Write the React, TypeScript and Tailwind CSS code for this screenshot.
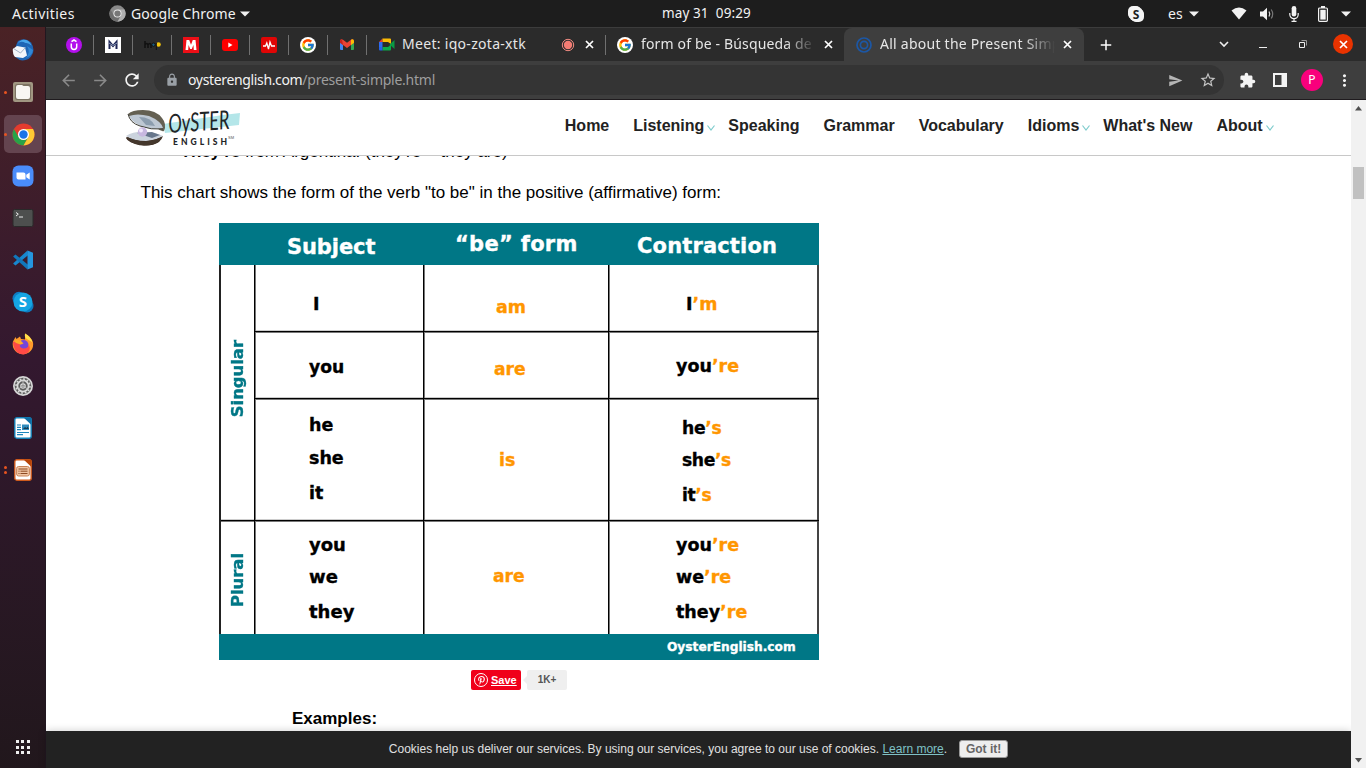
import React from "react";
import {
  MdArrowBack,
  MdArrowForward,
  MdRefresh,
  MdLock,
  MdSend,
  MdStarBorder,
  MdExtension,
  MdMoreVert,
  MdAdd,
} from "react-icons/md";
import { FcGoogle } from "react-icons/fc";
import { FaPinterestP } from "react-icons/fa";

const ubuntu = "font-['Noto_Sans',sans-serif]";

function Caret() {
  return (
    <svg width="10" height="6" viewBox="0 0 10 6" className="shrink-0">
      <path d="M0 .5h10L5 5.5z" fill="#f2f2f2" />
    </svg>
  );
}

function Cross({ className = "" }: { className?: string }) {
  return (
    <svg width="9" height="9" viewBox="0 0 9 9" className={`shrink-0 ${className}`}>
      <path d="M1 1l7 7M8 1 1 8" stroke="#fff" strokeWidth="1.700" fill="none" />
    </svg>
  );
}

function ChromeIcon({ size, mono = false }: { size: number; mono?: boolean }) {
  const [r, g, y, b, w] = mono
    ? ["#8a8a8a", "#6e6e6e", "#b0b0b0", "#777777", "#e8e8e8"]
    : ["#e33b2e", "#27a348", "#fcc934", "#1a73e8", "#ffffff"];
  return (
    <svg width={size} height={size} viewBox="0 0 48 48" className="shrink-0">
      <circle cx="24" cy="24" r="23" fill={r} />
      <path d="M4.100 12.500A23 23 0 0 0 24 47l10-17.300-10 5.800-10-5.800z" fill={g} />
      <path d="M24 47a23 23 0 0 0 19.900-34.500H24l10 5.800v11.400z" fill={y} />
      <circle cx="24" cy="24" r="11.500" fill={w} />
      <circle cx="24" cy="24" r="8.800" fill={b} />
    </svg>
  );
}

function TopBar() {
  return (
    <div className={`flex h-[27px] shrink-0 items-center bg-[#1d1d1d] text-[14px] text-[#f2f2f2] ${ubuntu}`}>
      <div className="w-[97px] pl-3 tracking-[0.45px]">Activities</div>
      <div className="flex w-[565px] items-center pl-3">
        <ChromeIcon size={17} mono />
        <span className="ml-[5px] mr-[5px] w-[104px] whitespace-nowrap tracking-[0.1px]">Google Chrome</span>
        <Caret />
      </div>
      <div className="w-[466px] whitespace-pre text-[13.5px] tracking-[0.1px]">may 31  09:29</div>
      <svg width="16" height="16" viewBox="0 0 16 16">
        <rect width="13" height="13" rx="5" fill="#f4f4f4" />
        <rect x="3" y="3" width="13" height="13" rx="5" fill="#f4f4f4" />
        <circle cx="8" cy="8" r="7.500" fill="#f4f4f4" />
        <text x="8" y="12.500" textAnchor="middle" className="text-[12px] font-bold" fontFamily="Noto Sans" fill="#1d1d1d">S</text>
      </svg>
      <span className="ml-6 mr-[6px]">es</span>
      <Caret />
      <svg width="16" height="13" viewBox="0 0 16 13" className="ml-8">
        <path d="M.5 3.500Q8-2.500 15.500 3.500L8 12.500z" fill="#f2f2f2" />
      </svg>
      <svg width="16" height="14" viewBox="0 0 16 14" className="ml-[12px]">
        <path d="M1 4.500h3L8 .8v12.400L4 9.500H1z" fill="#f2f2f2" />
        <path d="M10 4.500q1.600 2.500 0 5" stroke="#ddd" fill="none" strokeWidth="1.200" />
        <path d="M12.200 2.500q3 4.500 0 9" stroke="#777" fill="none" strokeWidth="1.200" />
      </svg>
      <svg width="10" height="16" viewBox="0 0 10 16" className="ml-[14px]">
        <rect x="2.700" y="0" width="4.600" height="10.500" rx="2.300" fill="#f2f2f2" />
        <path d="M.8 7v1.500a4.200 4.200 0 0 0 8.400 0V7M5 12.500V15M2.500 15.400h5" stroke="#f2f2f2" fill="none" strokeWidth="1.200" />
      </svg>
      <svg width="10" height="16" viewBox="0 0 10 16" className="ml-[19px]">
        <rect x=".6" y="2" width="8.800" height="13.300" rx="1" fill="none" stroke="#f2f2f2" strokeWidth="1.200" />
        <rect x="2.300" y="3.800" width="5.400" height="9.800" fill="#f2f2f2" />
        <rect x="3" y="0" width="4" height="2" fill="#f2f2f2" />
      </svg>
      <div className="ml-[13px]">
        <Caret />
      </div>
    </div>
  );
}

function DockItem({ children, dots = 0, active = false }: { children?: React.ReactNode; dots?: number; active?: boolean }) {
  return (
    <div className="flex h-[38px] w-[46px] items-center">
      <div className="z-10 flex w-1 flex-col items-end gap-[2px]">
        {dots > 0 && <i className="-mr-[3px] size-[3px] rounded-full bg-[#e95420]" />}
        {dots > 1 && <i className="-mr-[3px] size-[3px] rounded-full bg-[#e95420]" />}
      </div>
      <div className={`flex size-[38px] items-center justify-center rounded-[5px] ${active ? "bg-[#64444f]" : ""}`}>{children}</div>
    </div>
  );
}

function DocIcon({ color, dark, slides }: { color: string; dark: string; slides?: boolean }) {
  return (
    <svg width="18" height="22" viewBox="0 0 18 22">
      <rect x=".8" y=".8" width="16.400" height="20.400" rx="2" fill="#fff" stroke={color} strokeWidth="1.400" />
      <path d="M9.500.5H16q1.500 0 1.500 1.500v6z" fill={dark} />
      {slides ? (
        <>
          <rect x="2.600" y="7.500" width="12.800" height="9.500" rx="2" fill="#f0c5a5" stroke="#c98356" />
          <path d="M4.500 10h9M6.500 12.200h7M6.500 14.500h7M4.500 12.200h1M4.500 14.500h1" stroke="#8d4a22" strokeWidth="1" />
        </>
      ) : (
        <>
          <path d="M3 8h4M3 10.300h4M3 12.600h4M3 15.500h12M3 17.700h6" stroke="#1e87bd" strokeWidth="1.200" />
          <rect x="8" y="7.500" width="7" height="5.500" fill="#2f8bbd" />
          <path d="M9 12l2-2 1.500 1 1-1.500 1.500 2.500z" fill="#173c52" />
        </>
      )}
    </svg>
  );
}

function Dock() {
  return (
    <div className="flex w-[46px] shrink-0 flex-col gap-1 border-r border-[#211720] bg-gradient-to-b from-[#4a2225] via-[#33182f] via-45% to-[#21171c] pt-1">
      <DockItem>
        <svg width="22" height="22" viewBox="0 0 22 22">
          <path d="M6 2Q13-2 19 3.500q4 6 1.500 11.500-3 6.500-10 6.500-4-.5-6.500-3Q1 12 6 2z" fill="#1f66b5" />
          <path d="M10 1q7-1 9.500 5.500-3-3-6-2.500-5-3-8 1Q7 2 10 1z" fill="#49a6ea" />
          <path d="M.8 10 5 7l8 1.500 2 8-4 2.500-8-1Q.5 15 .8 10z" fill="#f3f6fa" />
          <path d="M1.500 9.500l7 4.500 5-5.500" stroke="#9fb0c4" fill="none" />
          <path d="M15 7q4 6-1 12 6-2 7-8z" fill="#3188d6" />
        </svg>
      </DockItem>
      <DockItem dots={1}>
        <svg width="22" height="22" viewBox="0 0 22 22">
          <rect x="1" y="1" width="20" height="20" rx="2" fill="#a19782" />
          <rect x="3" y="3" width="16" height="16" rx="2" fill="#7d7463" />
          <path d="M4 6q0-2 2-2h4l1.500 1H16q2 0 2 2v9q0 2-2 2H6q-2 0-2-2z" fill="#f8f6f2" />
        </svg>
      </DockItem>
      <DockItem dots={1} active>
        <ChromeIcon size={23} />
      </DockItem>
      <DockItem>
        <svg width="22" height="22" viewBox="0 0 22 22">
          <rect x=".5" y=".5" width="21" height="21" rx="6" fill="#4a8cfa" />
          <path d="M4.500 7.500h7q2 0 2 2v5h-7q-2 0-2-2zM14.300 9.800l3.400-2.400v7.200l-3.400-2.400z" fill="#fff" />
        </svg>
      </DockItem>
      <DockItem>
        <svg width="22" height="18" viewBox="0 0 22 18">
          <rect x="1" y=".5" width="20" height="17" rx="1.500" fill="#4d4f4e" stroke="#2a2a2a" />
          <path d="M4 3.500l2.300 1.700L4 7M7 8h4" stroke="#ededed" fill="none" />
        </svg>
      </DockItem>
      <DockItem>
        <svg width="20" height="20" viewBox="0 0 20 20">
          <path d="M14.500.5 15 5.300 2.500 15.500.3 13.800v-.6z" fill="#1787cf" />
          <path d="M14.500 19.500 15 14.700 2.500 4.500.3 6.200v.6z" fill="#1177bb" />
          <path d="M14.500.5 20 2.800v14.400l-5.500 2.300z" fill="#2596df" />
        </svg>
      </DockItem>
      <DockItem>
        <svg width="22" height="22" viewBox="0 0 22 22">
          <circle cx="7" cy="7.300" r="6.500" fill="#0e7cc1" />
          <circle cx="15" cy="15" r="6.500" fill="#0e7cc1" />
          <circle cx="11" cy="11" r="9.500" fill="#15a5e3" />
          <text x="11" y="16" textAnchor="middle" className="text-[15px] font-bold" fontFamily="Noto Sans" fill="#fff">S</text>
        </svg>
      </DockItem>
      <DockItem>
        <svg width="22" height="22" viewBox="0 0 22 22">
          <path d="M13 .5q6 3 8 9 1 6-4 10-6 3.500-12 0-5.500-4.500-4-11L3.500 4l1 2L8 3.500l1 2.500 4 .5z" fill="#ff9a2b" />
          <path d="M13 .5q6 3 7.500 9-2-2-4-2.500Q12 5 13 .5z" fill="#ffe14a" />
          <circle cx="11.500" cy="12" r="5" fill="#7546d8" />
          <path d="M1 9q3-1 4-1l3 .5q3 1 3 2.500l-3 .5q-1 3 3.500 4 5 0 5.500-4 3 8-5 10-10 0-11-12.500z" fill="#ff4a46" />
          <path d="M2 8l3-1.500L9 8l2.500 2.500-3 1L4 10z" fill="#ffad28" />
        </svg>
      </DockItem>
      <DockItem>
        <svg width="22" height="22" viewBox="0 0 22 22">
          <circle cx="11" cy="11" r="10" fill="#d8d8d8" />
          <circle cx="11" cy="11" r="8.300" fill="#5c5c5c" />
          <circle cx="11" cy="11" r="5.600" fill="none" stroke="#dadada" strokeWidth="1.800" />
          <circle cx="11" cy="11" r="7" fill="none" stroke="#dadada" strokeWidth="1.500" strokeDasharray="1.800 1.860" />
          <circle cx="11" cy="11" r="2.200" fill="none" stroke="#dadada" strokeWidth="1.200" />
          <path d="M11 11V5.500M11 11l-4.700 3M11 11l4.700 3" stroke="#bdbdbd" />
        </svg>
      </DockItem>
      <DockItem>
        <DocIcon color="#1582b8" dark="#0d6ea5" />
      </DockItem>
      <DockItem dots={2}>
        <DocIcon color="#cf5a1c" dark="#b74409" slides />
      </DockItem>
      <div className="mb-[14px] mt-auto grid grid-cols-[3px_3px_3px] justify-center gap-[2.5px]">
        {Array.from({ length: 9 }, (_, i) => (
          <i key={i} className="size-[3px] bg-[#eeeeee]" />
        ))}
      </div>
    </div>
  );
}

function GoogleDot() {
  return (
    <div className="flex size-4 shrink-0 items-center justify-center rounded-full bg-white">
      <FcGoogle size={14} />
    </div>
  );
}

function Pinned({ children }: { children: React.ReactNode }) {
  return (
    <div className="flex h-5 w-[39px] items-center justify-center border-r border-[#707070]">{children}</div>
  );
}

const fade = "[mask-image:linear-gradient(to_right,#000_82%,transparent)]";

function TabStrip() {
  return (
    <div className={`flex h-[34px] items-center border-t border-[#3c3c3c] bg-[#2b2b2b] pl-[9px] text-[14px] text-[#e6e6e6] ${ubuntu}`}>
      <Pinned>
        <svg width="16" height="16" viewBox="0 0 16 16">
          <circle cx="8" cy="8" r="8" fill="#b30fec" />
          <path d="M5.300 6.500v3.300a2.700 2.700 0 0 0 5.400 0V6.500M5.500 4.600 8 3l2.500 1.600" stroke="#fff" strokeWidth="1.500" fill="none" />
        </svg>
      </Pinned>
      <Pinned>
        <svg width="16" height="16" viewBox="0 0 16 16">
          <path fill="#fff" d="M0 0h16v16H0z" />
          <path d="M4.500 12V5l3.500 4 3.500-4v7" stroke="#1d2454" strokeWidth="2" fill="none" />
          <path d="M4 6l4 2.500L12 6" stroke="#8998b5" fill="none" />
        </svg>
      </Pinned>
      <Pinned>
        <svg width="17" height="12" viewBox="0 0 17 12">
          <path d="M1 9V2M1 6q2-3 3 0v3M4 6q2-3 3 0v3" stroke="#111" strokeWidth="1.500" fill="none" />
          <circle cx="9.500" cy="5.700" r="1.700" fill="#1a5a80" stroke="#111" />
          <circle cx="14.500" cy="5.500" r="2.300" fill="#f2c40c" />
          <path d="M12.300 4v7" stroke="#111" />
        </svg>
      </Pinned>
      <Pinned>
        <svg width="16" height="16" viewBox="0 0 16 16">
          <path fill="#ed0f17" d="M0 0h16v16H0z" />
          <path d="M2.500 13 3.500 3h2.700L8 7.800 9.800 3h2.700l1 10h-2.700l-.4-5L8.800 12H7.200L5.600 8l-.4 5z" fill="#fff" />
        </svg>
      </Pinned>
      <Pinned>
        <svg width="16" height="12" viewBox="0 0 16 12">
          <rect width="16" height="12" rx="3" fill="#f00" />
          <path d="M6.300 3.500v5l4.200-2.500z" fill="#fff" />
        </svg>
      </Pinned>
      <Pinned>
        <svg width="16" height="16" viewBox="0 0 16 16">
          <rect width="16" height="16" rx="2" fill="#e00505" />
          <path d="M2 9h2.500l1.300-3 1.700 6L9 5l1.500 4H14" stroke="#fff" strokeWidth="1.300" fill="none" />
        </svg>
      </Pinned>
      <Pinned>
        <GoogleDot />
      </Pinned>
      <Pinned>
        <svg width="14" height="11" viewBox="0 0 14 11">
          <path d="M0 2h3v9H1q-1 0-1-1z" fill="#4285f4" />
          <path d="M11 2h3v8q0 1-1 1h-2z" fill="#34a853" />
          <path d="M0 1.500Q1-.5 3 .7l4 3 4-3q2-1 3 1v2L7 9 0 3.700z" fill="#ea4335" />
          <path d="M11 .7q2-1.200 3 1v2L11 6z" fill="#fbbc04" />
          <path d="M0 1.700q.5-1.500 2-1.200L3 6 0 3.700z" fill="#c5221f" />
        </svg>
      </Pinned>
      <div className="flex h-5 w-[239px] items-center border-r border-[#707070] pl-3">
        <svg width="16" height="13" viewBox="0 0 16 13" className="shrink-0">
          <path d="M0 4h3.500v5H0z" fill="#2f6cf0" />
          <path d="M0 4 3.500.5V4z" fill="#ea3a30" />
          <path d="M3.500.5H11q1 0 1 1V6L9 4H3.500z" fill="#fbbc04" />
          <path d="M3.500 9H9l3-2.500v5q0 1-1 1H3.500z" fill="#0caa4b" />
          <path d="M0 9h3.500v3.500H1q-1 0-1-1z" fill="#2563e8" />
          <path d="M10.500 6.500 15.500 2v9z" fill="#0b9a44" />
        </svg>
        <span className="-mt-[2px] ml-[7px] w-[159px] shrink-0 whitespace-nowrap tracking-[0.3px]">Meet: iqo-zota-xtk</span>
        <svg width="14" height="14" viewBox="0 0 14 14" className="shrink-0">
          <circle cx="7" cy="7" r="5.700" fill="none" stroke="#f28b82" />
          <circle cx="7" cy="7" r="4.200" fill="#f47c73" />
        </svg>
        <Cross className="ml-[10px]" />
      </div>
      <div className="flex h-5 w-[238px] items-center pl-[11px]">
        <GoogleDot />
        <span className={`-mt-[2px] ml-2 w-[175px] shrink-0 overflow-hidden whitespace-nowrap tracking-[0.15px] ${fade}`}>
          form of be - Búsqueda de G
        </span>
        <Cross className="ml-2" />
      </div>
      <div className="flex h-[33px] w-[240px] items-center rounded-t-lg bg-[#3e3e3e] pl-3">
        <svg width="16" height="16" viewBox="0 0 16 16" className="shrink-0">
          <g fill="none" stroke="#1c57a5">
            <circle cx="8" cy="8" r="7" strokeWidth="1.700" />
            <circle cx="8" cy="8" r="3.600" strokeWidth="1.700" />
          </g>
        </svg>
        <span className={`-mt-[2px] ml-2 w-[175px] shrink-0 overflow-hidden whitespace-nowrap tracking-[0.25px] ${fade}`}>
          All about the Present Simple
        </span>
        <Cross className="ml-2" />
      </div>
      <MdAdd size={18} className="ml-[13px]" color="#fff" />
      <svg width="10" height="7" viewBox="0 0 10 7" className="ml-[104px]">
        <path d="M1 1l4 4 4-4" stroke="#eee" strokeWidth="1.600" fill="none" />
      </svg>
      <i className="ml-[30px] mt-[5px] h-px w-2 bg-[#eeeeee]" />
      <svg width="9" height="9" viewBox="0 0 9 9" className="ml-[32px]">
        <path d="M.5 2.500h5v5h-5z" stroke="#eee" fill="none" />
        <path d="M2.500.5h5v5" stroke="#999" fill="none" />
      </svg>
      <div className="-mt-px ml-[25px] flex size-5 items-center justify-center rounded-full bg-[#e93300]">
        <Cross />
      </div>
    </div>
  );
}

function Toolbar() {
  return (
    <div className={`flex h-[39px] items-center border-b border-[#1f1b1e] bg-[#3e3e3e] pl-[13px] ${ubuntu}`}>
      <MdArrowBack size={19} color="#898989" />
      <MdArrowForward size={19} color="#898989" className="ml-[13px]" />
      <MdRefresh size={20} color="#f4f4f4" className="ml-[12px]" />
      <div className="ml-3 flex h-[30px] w-[1070px] items-center rounded-full bg-[#343434] pl-[11px] text-[14px]">
        <MdLock size={14} color="#9aa0a6" />
        <span className="-mt-px ml-[9px] tracking-[-0.35px] text-[#f2f2f2]">oysterenglish.com</span>
        <span className="-mt-px tracking-[-0.25px] text-[#9e9e9e]">/present-simple.html</span>
        <MdSend size={15} color="#b5b5b5" className="ml-auto" />
        <MdStarBorder size={18} color="#c4c4c4" className="ml-4 mr-[7px]" />
      </div>
      <MdExtension size={17} color="#f4f4f4" className="ml-[15px]" />
      <svg width="14" height="14" viewBox="0 0 14 14" className="ml-[17px]">
        <path d="M0 0h14v14H0zM2 2v10h6.500V2z" fill="#f4f4f4" fillRule="evenodd" />
      </svg>
      <div className="ml-[14px] flex size-[22px] items-center justify-center rounded-full bg-[#f9007c] text-[12px] text-white">P</div>
      <MdMoreVert size={19} color="#f4f4f4" className="ml-[12px]" />
    </div>
  );
}

function Logo() {
  return (
    <svg width="116" height="40" viewBox="0 0 116 40" className="mt-[6px] shrink-0">
      <path d="M38 18l60-9 17-2-1 12-74 8z" fill="#b4e6e9" />
      <path d="M1 32q10-6 20-3l16 2-3 5q-8 5-18 3Q3 37 1 32z" fill="#38251b" />
      <path d="M1 30q8-5 20-4 12 1 17 4-6 4-17 5Q8 35 1 30z" fill="#cbd3dd" />
      <path d="M1 31q12 5 22 4 9-1 15-5-2 6-9 8-10 3-19 0-7-3-9-7z" fill="#44372c" />
      <path d="M12 27l15 5 8-3-8-3z" fill="#67768b" />
      <path d="M3 8Q7 4 18 4q13 0 19 8 5 6 2 13-3 1-7-3Q26 11 4 10z" fill="#646052" />
      <path d="M4 10q8-3 20 0 12 5 14 12-8 2-17 0Q8 18 4 10z" fill="#bec8d3" />
      <path d="M14 11q12 0 16 9l-9-1z" fill="#8c9dae" />
      <path d="M3 8q2 9 12 12 11 4 23 3" stroke="#414038" fill="none" />
      <circle cx="17.500" cy="26" r="4.700" fill="#c8b8e0" />
      <circle cx="16" cy="24.500" r="2" fill="#f2e9fc" />
      <text
        x="44"
        y="27"
        textLength="61"
        lengthAdjust="spacingAndGlyphs"
        transform="rotate(-4 44 27)"
        fontFamily="Lato"
        className="text-[26px] italic"
        fill="#1f2527"
      >
        OySTER
      </text>
      <text x="48" y="39" textLength="54" fontFamily="Lato" className="text-[8.5px] font-black" fill="#1f2527">
        ENGLISH
      </text>
      <text x="103" y="33" className="text-[4px]" fontFamily="Liberation Sans" fill="#555">SM</text>
    </svg>
  );
}

function NavCaret() {
  return (
    <svg width="8" height="6" viewBox="0 0 8 6" className="ml-[3px] mr-[-11px] mt-1">
      <path d="M.5.5 4 5 7.500.5" stroke="#7fcccd" strokeWidth="1.200" fill="none" />
    </svg>
  );
}

const nav = [
  { label: "Home" },
  { label: "Listening", menu: true },
  { label: "Speaking" },
  { label: "Grammar" },
  { label: "Vocabulary" },
  { label: "Idioms", menu: true },
  { label: "What's New" },
  { label: "About", menu: true },
];

type Line = { a?: string; b?: string; cls: string };

function Cell({ lines, cls }: { lines: Line[]; cls: string }) {
  return (
    <div className={`overflow-hidden border-l border-black pt-px shadow-[inset_1px_0_0_#777] ${cls}`}>
      {lines.map((l, i) => (
        <div key={i} className={`h-5 whitespace-nowrap leading-5 ${l.cls}`}>
          <span>{l.a}</span>
          <span className="text-[#ff9600]">{l.b}</span>
        </div>
      ))}
    </div>
  );
}

const rule = "border-b border-black shadow-[0_1px_0_#777,inset_0_-1px_0_#ccc]";

function Row({ cls, cells }: { cls: string; cells: Line[][] }) {
  return (
    <div className={`grid grid-cols-[169px_185px_211px] ${cls}`}>
      {cells.map((c, i) => (
        <Cell key={i} lines={c} cls={i === 2 ? "border-r-2 border-r-[#444]" : ""} />
      ))}
    </div>
  );
}

function Chart() {
  return (
    <div className="ml-[173px] flex h-[437px] w-[600px] flex-col font-['DejaVu_Sans',sans-serif] font-bold text-black [-webkit-text-stroke:0.35px_currentColor]">
      <div className="grid h-[42px] grid-cols-[68px_168px_182px_1fr] bg-[#007786] text-[21px] leading-[26px] text-white">
        <div />
        <div className="mt-[11px] tracking-[-0.1px]">Subject</div>
        <div className="mt-[8px] tracking-[0.3px]">“be” form</div>
        <div className="mt-[10px] tracking-[0.15px]">Contraction</div>
      </div>
      <div className="flex h-[369px]">
        <div className="flex w-[35px] flex-col border-l-2 border-[#222] text-[16.4px] text-[#007786]">
          <div className={`flex h-[256px] items-end justify-center pb-[103px] ${rule}`}>
            <span className="rotate-180 leading-[18px] [writing-mode:vertical-rl]">Singular</span>
          </div>
          <div className="flex items-start justify-center pt-[32px]">
            <span className="rotate-180 leading-[18px] [writing-mode:vertical-rl]">Plural</span>
          </div>
        </div>
        <div>
          <Row
            cls={`h-[67px] ${rule}`}
            cells={[
              [{ a: "I", cls: "mt-[28px] pl-[58px] text-[17.5px]" }],
              [{ b: "am", cls: "mt-[31px] pl-[72px] text-[17.5px]" }],
              [{ a: "I", b: "’m", cls: "mt-[28px] pl-[77px] text-[17.5px]" }],
            ]}
          />
          <Row
            cls={`h-[67px] ${rule}`}
            cells={[
              [{ a: "you", cls: "mt-[24px] pl-[54px] text-[17.2px]" }],
              [{ b: "are", cls: "mt-[26px] pl-[70px] text-[17.2px]" }],
              [{ a: "you", b: "’re", cls: "mt-[23px] pl-[67px] text-[17.5px]" }],
            ]}
          />
          <Row
            cls={`h-[122px] ${rule}`}
            cells={[
              [
                { a: "he", cls: "mt-[15px] pl-[54px] text-[17.5px]" },
                { a: "she", cls: "mt-[13px] pl-[54px] text-[17.5px]" },
                { a: "it", cls: "mt-[15px] pl-[54px] text-[17.5px]" },
              ],
              [{ b: "is", cls: "mt-[50px] pl-[75px] text-[17.5px]" }],
              [
                { a: "he", b: "’s", cls: "mt-[18px] pl-[73px] text-[17.2px] tracking-[-0.3px]" },
                { a: "she", b: "’s", cls: "mt-[12px] pl-[73px] text-[17.2px] tracking-[-0.4px]" },
                { a: "it", b: "’s", cls: "mt-[15px] pl-[73px] text-[17.2px] tracking-[-0.4px]" },
              ],
            ]}
          />
          <Row
            cls="h-[113px]"
            cells={[
              [
                { a: "you", cls: "mt-[13px] pl-[54px] text-[18px]" },
                { a: "we", cls: "mt-[12px] pl-[54px] text-[18px]" },
                { a: "they", cls: "mt-[15px] pl-[54px] text-[18px]" },
              ],
              [{ b: "are", cls: "mt-[44px] pl-[69px] text-[17.2px]" }],
              [
                { a: "you", b: "’re", cls: "mt-[13px] pl-[67px] text-[17.5px]" },
                { a: "we", b: "’re", cls: "mt-[12px] pl-[67px] text-[17.5px]" },
                { a: "they", b: "’re", cls: "mt-[15px] pl-[67px] text-[17.5px]" },
              ],
            ]}
          />
        </div>
      </div>
      <div className="h-[26px] bg-[#007786] pl-[448px] text-[12.2px] leading-[26px] text-white">OysterEnglish.com</div>
    </div>
  );
}

function Page() {
  return (
    <div className="flex min-h-0 flex-1 bg-white font-['Liberation_Sans',sans-serif]">
      <div className="flex min-w-0 flex-1 flex-col">
        <div className="flex h-14 shrink-0 border-b border-[#c8c8c8] pl-[79px]">
          <Logo />
          <nav className="ml-[323.8px] flex h-[51px] items-center gap-6 text-[16px] font-bold text-[#222]">
            {nav.map((n) => (
              <span key={n.label} className="flex items-center whitespace-nowrap">
                {n.label}
                {n.menu && <NavCaret />}
              </span>
            ))}
          </nav>
        </div>
        <div className="min-h-0 flex-1 overflow-hidden text-[17px] text-black">
          <p className="-mt-[14px] ml-[134.5px] h-5 leading-5">
            <b>They're</b> from Argentina. (they're = they are)
          </p>
          <p className="ml-[94.5px] mt-[21px] h-5 leading-5">
            This chart shows the form of the verb "to be" in the positive (affirmative) form:
          </p>
          <div className="h-5" />
          <Chart />
          <div className="ml-[425px] mt-[10px] flex h-5 items-center">
            <div className="flex h-5 w-[50px] items-center rounded-[2px] bg-[#f0001a] pl-[3px] text-[11px] font-bold text-white">
              <div className="mr-[3px] flex size-[14px] items-center justify-center rounded-full border border-white">
                <FaPinterestP size={9} />
              </div>
              <span className="underline">Save</span>
            </div>
            <svg width="6" height="8" viewBox="0 0 6 8">
              <path d="M6 0v8L2 4z" fill="#eee" />
            </svg>
            <div className="h-5 w-10 rounded-[2px] bg-[#efefef] text-center text-[10px] font-bold leading-[19px] text-[#555]">1K+</div>
          </div>
          <p className="ml-[246px] mt-[19px] h-5 font-bold leading-5">Examples:</p>
        </div>
        <div className="flex h-[37px] shrink-0 items-center bg-[#222] pl-[342.8px] text-[12px] text-[#e0e0e0] shadow-[0_0_8px_rgba(0,0,0,0.2)]">
          <span className="-mt-[2px]">
            Cookies help us deliver our services. By using our services, you agree to our use of cookies.{" "}
            <span className="text-[#7fc1c6] underline">Learn more</span>.
          </span>
          <span className="-mt-[2px] ml-3 h-[18px] w-[49px] rounded-[3px] border border-[#999] bg-[#eeeeee] text-center font-bold leading-4 text-[#666]">
            Got it!
          </span>
        </div>
      </div>
      <div className="flex w-[15px] shrink-0 flex-col items-center bg-[#f1f1f1]">
        <svg width="7" height="5" viewBox="0 0 7 5" className="mt-[6px]">
          <path d="M3.500 0 7 4.500H0z" fill="#505050" />
        </svg>
        <div className="mt-14 h-8 w-[11px] bg-[#c1c1c1]" />
        <svg width="7" height="5" viewBox="0 0 7 5" className="mb-[5px] mt-auto">
          <path d="M3.500 4.500 7 0H0z" fill="#505050" />
        </svg>
      </div>
    </div>
  );
}

export default function App() {
  return (
    <div className="flex h-[768px] w-[1366px] flex-col overflow-hidden">
      <TopBar />
      <div className="flex min-h-0 flex-1">
        <Dock />
        <div className="flex min-w-0 flex-1 flex-col">
          <TabStrip />
          <Toolbar />
          <Page />
        </div>
      </div>
    </div>
  );
}
